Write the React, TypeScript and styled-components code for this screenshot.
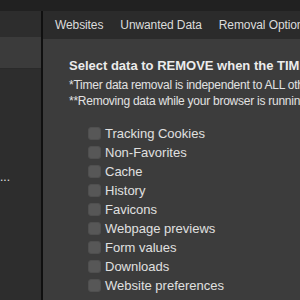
import styled, { createGlobalStyle } from "styled-components"

const GlobalStyle = createGlobalStyle`
    body {
        margin: 0;
        background: #202020;
        font-family: "Liberation Sans", Arial, sans-serif;
    }
`

const tabs = ["Websites", "Unwanted Data", "Removal Options"]

const dataTypes = [
    "Tracking Cookies",
    "Non-Favorites",
    "Cache",
    "History",
    "Favicons",
    "Webpage previews",
    "Form values",
    "Downloads",
    "Website preferences",
]

export default function App() {
    return (
        <>
            <GlobalStyle />
            <Window>
                <TitleStrip />
                <Main>
                    <Sidebar>
                        <SideItem />
                        <SideItem $selected={true} />
                        <SideMore>...</SideMore>
                    </Sidebar>

                    <Panel>
                        <TabBar>
                            {tabs.map((t) => (
                                <Tab key={t}>{t}</Tab>
                            ))}
                        </TabBar>

                        <Content>
                            <Heading>
                                Select data to REMOVE when the TIMER ends
                            </Heading>
                            <Note>
                                *Timer data removal is independent to ALL other
                                settings
                            </Note>
                            <Note>
                                **Removing data while your browser is running
                                may slow it down
                            </Note>

                            <List>
                                {dataTypes.map((d) => (
                                    <Row key={d}>
                                        <Box />
                                        <Label>{d}</Label>
                                    </Row>
                                ))}
                            </List>
                        </Content>
                    </Panel>
                </Main>
            </Window>
        </>
    )
}

const Window = styled.div`
    display: flex;
    flex-direction: column;
    width: 300px;
    height: 300px;
    overflow: hidden;
    background: #202020;
`

const TitleStrip = styled.div`
    height: 11px;
    flex-shrink: 0;
    background: #212121;
`

const Main = styled.div`
    display: flex;
    flex-direction: row;
    flex: 1;
    min-height: 0;
`

const Sidebar = styled.div`
    display: flex;
    flex-direction: column;
    width: 41px;
    flex-shrink: 0;
    background: #2d2d2d;
    border-right: 2px solid #101010;
`

const SideItem = styled.div<{ $selected?: boolean }>`
    height: ${({ $selected }) => ($selected ? "31px" : "26px")};
    background: ${({ $selected }) => ($selected ? "#3b3b3b" : "#2d2d2d")};
    border-bottom: ${({ $selected }) =>
        $selected ? "1px solid #2a2a2a" : "none"};
`

const SideMore = styled.div`
    margin-top: 101px;
    color: #e2e2e2;
    font-size: 12px;
    line-height: 14px;
    white-space: nowrap;
`

const Panel = styled.div`
    display: flex;
    flex-direction: column;
    flex: 1;
    min-width: 0;
    background: #3c3c3c;
`

const TabBar = styled.div`
    display: flex;
    flex-direction: row;
    align-items: center;
    gap: 17px;
    height: 28px;
    flex-shrink: 0;
    padding-left: 12px;
    background: #2b2b2b;
    white-space: nowrap;
    overflow: hidden;
`

const Tab = styled.div`
    color: #dcdcdc;
    font-size: 12px;
    letter-spacing: -0.1px;
`

const Content = styled.div`
    display: flex;
    flex-direction: column;
    padding: 19px 0 0 26px;
    white-space: nowrap;
`

const Heading = styled.div`
    color: #ececec;
    font-size: 13px;
    font-weight: bold;
    line-height: 16px;
    margin-bottom: 3px;
`

const Note = styled.div`
    color: #e2e2e2;
    font-size: 12px;
    line-height: 16px;
    letter-spacing: -0.25px;
`

const List = styled.div`
    display: flex;
    flex-direction: column;
    margin-top: 15px;
    padding-left: 19px;
`

const Row = styled.div`
    display: flex;
    flex-direction: row;
    align-items: center;
    gap: 4px;
    height: 19px;
`

const Box = styled.div`
    width: 13px;
    height: 13px;
    box-sizing: border-box;
    border-radius: 3px;
    background: #575757;
    border: 1px solid #4f4f4f;
`

const Label = styled.div`
    color: #e0e0e0;
    font-size: 13px;
`
